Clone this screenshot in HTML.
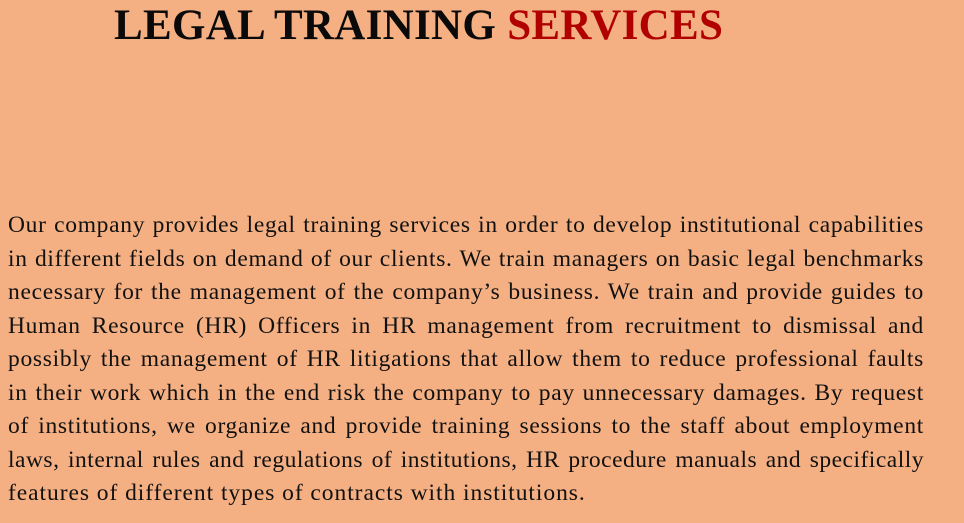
<!DOCTYPE html>
<html><head><meta charset="utf-8"><style>
html,body{margin:0;padding:0;}
body{width:964px;height:523px;background:#F4AF82;position:relative;overflow:hidden;font-family:"Liberation Serif",serif;color:#111;}
h1{position:absolute;left:114px;top:1px;margin:0;font-size:43px;font-weight:bold;letter-spacing:0.3px;white-space:nowrap;color:#0a0a0a;}
h1 span{color:#B00000;}
.body{position:absolute;left:8px;top:209px;width:916px;font-size:23.5px;letter-spacing:0.7px;}
.l{height:33.5px;line-height:33.5px;text-align:justify;text-align-last:justify;white-space:nowrap;}
.l.last{text-align-last:left;letter-spacing:0.95px;}
.l.t{letter-spacing:0.5px;}
</style></head><body>
<h1>LEGAL TRAINING <span>SERVICES</span></h1>
<div class="body">
<div class="l">Our company provides legal training services in order to develop institutional capabilities</div>
<div class="l">in different fields on demand of our clients. We train managers on basic legal benchmarks</div>
<div class="l">necessary for the management of the company’s business. We train and provide guides to</div>
<div class="l">Human Resource (HR) Officers in HR management from recruitment to dismissal and</div>
<div class="l">possibly the management of HR litigations that allow them to reduce professional faults</div>
<div class="l">in their work which in the end risk the company to pay unnecessary damages. By request</div>
<div class="l">of institutions, we organize and provide training sessions to the staff about employment</div>
<div class="l t">laws, internal rules and regulations of institutions, HR procedure manuals and specifically</div>
<div class="l last">features of different types of contracts with institutions.</div>
</div>
</body></html>
